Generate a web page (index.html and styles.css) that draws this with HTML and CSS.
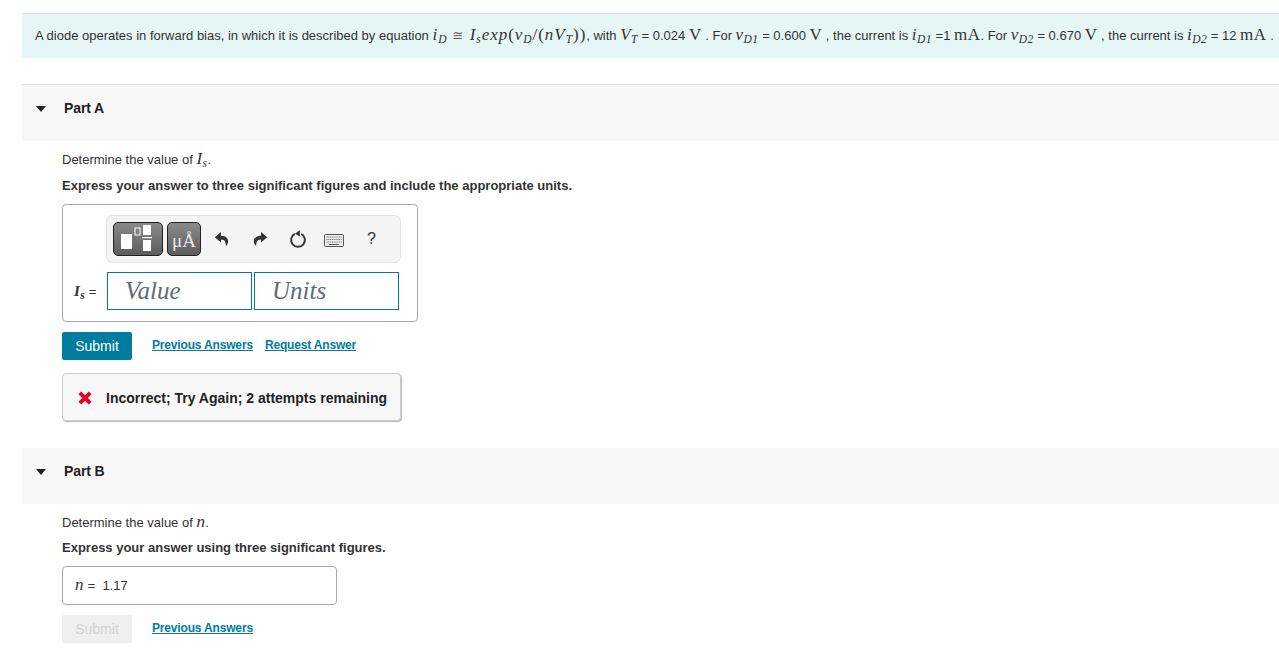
FILE: index.html
```html
<!DOCTYPE html>
<html lang="en">
<head>
<meta charset="utf-8">
<title>Diode in forward bias</title>
<link rel="stylesheet" href="styles.css">
</head>
<body>
<main class="page">
  <div class="intro">A diode operates in forward bias, in which it is described by equation <span class="m m-long"><i>i<sub>D</sub></i> <span class="rel">≅</span> <i>I<sub>s</sub>exp</i>(<i>v<sub>D</sub></i>/(<i>nV<sub>T</sub></i>))</span>, with <span class="m"><i>V<sub>T</sub></i></span> = 0.024 <span class="m">V</span> . For <span class="m"><i>v<sub>D1</sub></i></span> = 0.600 <span class="m">V</span> , the current is <span class="m"><i>i<sub>D1</sub></i></span> =1 <span class="m">mA</span>. For <span class="m"><i>v<sub>D2</sub></i></span> = 0.670 <span class="m">V</span> , the current is <span class="m"><i>i<sub>D2</sub></i></span> = 12 <span class="m">mA</span> .</div>

  <section class="part part-a">
    <header class="part-head">
      <span class="caret"></span>
      <h2>Part A</h2>
    </header>
    <div class="part-body">
      <p class="q">Determine the value of <span class="m"><i>I<sub>s</sub></i></span>.</p>
      <p class="instr">Express your answer to three significant figures and include the appropriate units.</p>
      <div class="answer">
        <div class="toolbar">
          <button class="tool tool-tpl" aria-label="Templates">
            <svg width="48" height="32" viewBox="0 0 48 32"><rect x="7" y="11" width="11" height="15" fill="#fff"/><rect x="21" y="5" width="5" height="7" fill="none" stroke="#fff"/><rect x="29" y="2" width="8" height="10" fill="#fff"/><rect x="28" y="14" width="10" height="1.2" fill="#fff"/><rect x="29" y="17" width="8" height="11" fill="#fff"/></svg>
          </button>
          <button class="tool tool-unit">μÅ</button>
          <span class="ico ico-undo"><svg width="16" height="16" viewBox="0 0 16 16"><path d="M7 1 .8 6.300 7 11.500V8.400c2.600 0 4 .9 4.500 3.500l.5 3c1.800-1.700 2.500-3.900 2-6C13.400 6.200 10.500 4.800 7 4.700Z" fill="#333"/></svg></span>
          <span class="ico ico-redo"><svg width="16" height="16" viewBox="0 0 16 16"><path d="M9 1l6.200 5.300L9 11.500V8.400c-2.600 0-4 .9-4.500 3.500L4 14.900C2.200 13.200 1.500 11 2 9 2.600 6.200 5.500 4.800 9 4.700Z" fill="#333"/></svg></span>
          <span class="ico ico-reset"><svg width="18" height="18" viewBox="0 0 18 18"><path d="M5.800 3.800A6.900 6.900 0 1 0 12.200 3.800" fill="none" stroke="#333" stroke-width="1.900"/><path d="M10.800 0 6 3.800l5 2.800Z" fill="#333"/></svg></span>
          <span class="ico ico-kbd"><svg width="20" height="13" viewBox="0 0 20 13"><rect x=".5" y=".5" width="19" height="12" rx="1" fill="#eee" stroke="#555"/><path d="M2.500 3h15M2.500 5.500h15M2.500 8h15" stroke="#666" stroke-dasharray="1 .8"/><path d="M5 10.500h10" stroke="#555"/></svg></span>
          <span class="ico ico-help">?</span>
        </div>
        <div class="fields">
          <label class="var"><span class="m"><i>I<sub>s</sub></i></span> =</label>
          <div class="field">Value</div>
          <div class="field field-units">Units</div>
        </div>
      </div>
      <div class="actions">
        <button class="submit">Submit</button>
        <a class="link" href="#">Previous Answers</a>
        <a class="link" href="#">Request Answer</a>
      </div>
      <div class="feedback">
        <svg class="x" width="16" height="16" viewBox="0 0 16 16"><path d="M2.800 2.800 13.200 13.200M13.200 2.800 2.800 13.200" stroke="#e0002a" stroke-width="4"/></svg>
        <span>Incorrect; Try Again; 2 attempts remaining</span>
      </div>
    </div>
  </section>

  <section class="part part-b">
    <header class="part-head part-head-b">
      <span class="caret"></span>
      <h2>Part B</h2>
    </header>
    <div class="part-body">
      <p class="q">Determine the value of <span class="m"><i>n</i></span>.</p>
      <p class="instr instr-b">Express your answer using three significant figures.</p>
      <div class="answer-b"><span class="m"><i>n</i></span> =&nbsp; 1.17</div>
      <div class="actions actions-b">
        <button class="submit submit-off">Submit</button>
        <a class="link" href="#">Previous Answers</a>
      </div>
    </div>
  </section>
</main>
</body>
</html>
```

FILE: styles.css
```css
* { box-sizing: border-box; }
html, body { margin: 0; padding: 0; }
body {
  height: 650px;
  overflow: hidden;
  background: #fff;
  color: #333;
  font-family: "Liberation Sans", Arial, sans-serif;
  font-size: 13px;
}
.page { padding: 13px 0 0 22px; }
.intro {
  height: 45px;
  padding: 0 0 0 13px;
  line-height: 43px;
  background: #e6f6f7;
  border-top: 1px solid #e2e2e2;
  white-space: nowrap;
  overflow: hidden;
}
.m {
  font-family: "Liberation Serif", "DejaVu Serif", serif;
  font-size: 17px;
  line-height: 0;
  letter-spacing: 0.45px;
}
.m-long { letter-spacing: 0.95px; }
.m sub { font-size: 11.500px; line-height: 0; vertical-align: -3px; }
.rel { font-family: "DejaVu Sans", sans-serif; font-size: 13px; color: #555; }
.part-a { margin-top: 26px; }
.part-b { margin-top: 27px; }
.part-head {
  display: flex;
  align-items: flex-start;
  height: 57px;
  padding: 15px 0 0 13px;
  background: #f8f8f8;
  border-top: 1px solid #dedede;
}
.part-head-b { height: 56px; border-top: 0; }
.part-head h2 {
  margin: 0;
  font-size: 14px;
  line-height: 16px;
  font-weight: 700;
  color: #222;
  letter-spacing: -0.1px;
}
.caret {
  width: 0;
  height: 0;
  margin: 6px 18px 0 1px;
  border-left: 5.500px solid transparent;
  border-right: 5.500px solid transparent;
  border-top: 6px solid #222;
}
.part-body { padding: 11px 0 0 40px; }
.q { margin: 0; line-height: 16px; }
.instr { margin: 10px 0 0; line-height: 16px; font-weight: 700; }
.instr-b { margin-top: 9px; }
.answer {
  width: 356px;
  height: 118px;
  margin-top: 10px;
  padding: 10px 0 0 43px;
  border: 1px solid #aaa;
  border-radius: 4px;
}
.toolbar {
  display: flex;
  align-items: center;
  width: 295px;
  height: 48px;
  padding: 0 0 0 6px;
  background: #f4f4f4;
  border: 1px solid #e4e4e4;
  border-radius: 6px;
}
.tool {
  height: 34px;
  padding: 0;
  border: 1px solid #222;
  border-radius: 5px;
  background: linear-gradient(#8a8a8a, #5c5c5c);
  color: #e8e8e8;
  display: flex;
  align-items: center;
  justify-content: center;
}
.tool-tpl { width: 50px; }
.tool-unit {
  width: 34px;
  margin-left: 4px;
  padding-top: 3px;
  font-family: "Liberation Serif", serif;
  font-size: 19px;
}
.ico { display: flex; align-items: center; justify-content: center; color: #333; }
.ico-undo { margin-left: 13px; width: 16px; }
.ico-redo { margin-left: 22px; width: 16px; }
.ico-reset { margin-left: 21px; width: 18px; }
.ico-kbd { margin-left: 17px; width: 20px; margin-top: 2px; }
.ico-help { margin-left: 23px; font-size: 16px; }
.fields { display: flex; align-items: center; margin-top: 9px; margin-left: -32px; }
.var { width: 33px; font-size: 13px; white-space: nowrap; }
.var .m { font-size: 15px; font-weight: 700; }
.field {
  width: 145px;
  height: 38px;
  padding-left: 17px;
  border: 1px solid #007c9a;
  font-family: "Liberation Serif", serif;
  font-style: italic;
  font-size: 25px;
  line-height: 36px;
  color: #5d6c7a;
}
.field-units { margin-left: 2px; }
.actions { display: flex; align-items: flex-start; margin-top: 10px; }
.submit {
  width: 70px;
  height: 28px;
  padding: 0;
  border: 0;
  border-radius: 2px;
  background: #007c9f;
  color: #fff;
  font: 14px "Liberation Sans", Arial, sans-serif;
}
.submit-off { background: #efefef; color: #d2d2d2; }
.link {
  margin: 6px 0 0 20px;
  font-size: 12px;
  line-height: 15px;
  font-weight: 700;
  color: #007c9f;
  letter-spacing: -0.17px;
  text-decoration: underline;
}
.link + .link { margin-left: 12px; }
.feedback {
  display: flex;
  align-items: center;
  width: 339px;
  height: 48px;
  margin-top: 13px;
  padding: 1px 0 0 14px;
  background: #f8f8f8;
  border: 1px solid #ccc;
  border-radius: 4px;
  box-shadow: 1px 1px 1px #bbb;
  font-weight: 700;
  font-size: 14px;
  color: #222;
}
.x { margin-right: 13px; }
.answer-b {
  width: 275px;
  height: 39px;
  margin-top: 10px;
  padding-left: 12px;
  border: 1px solid #aaa;
  border-radius: 4px;
  line-height: 37px;
  font-size: 13px;
}
.actions-b { margin-top: 10px; }
```
